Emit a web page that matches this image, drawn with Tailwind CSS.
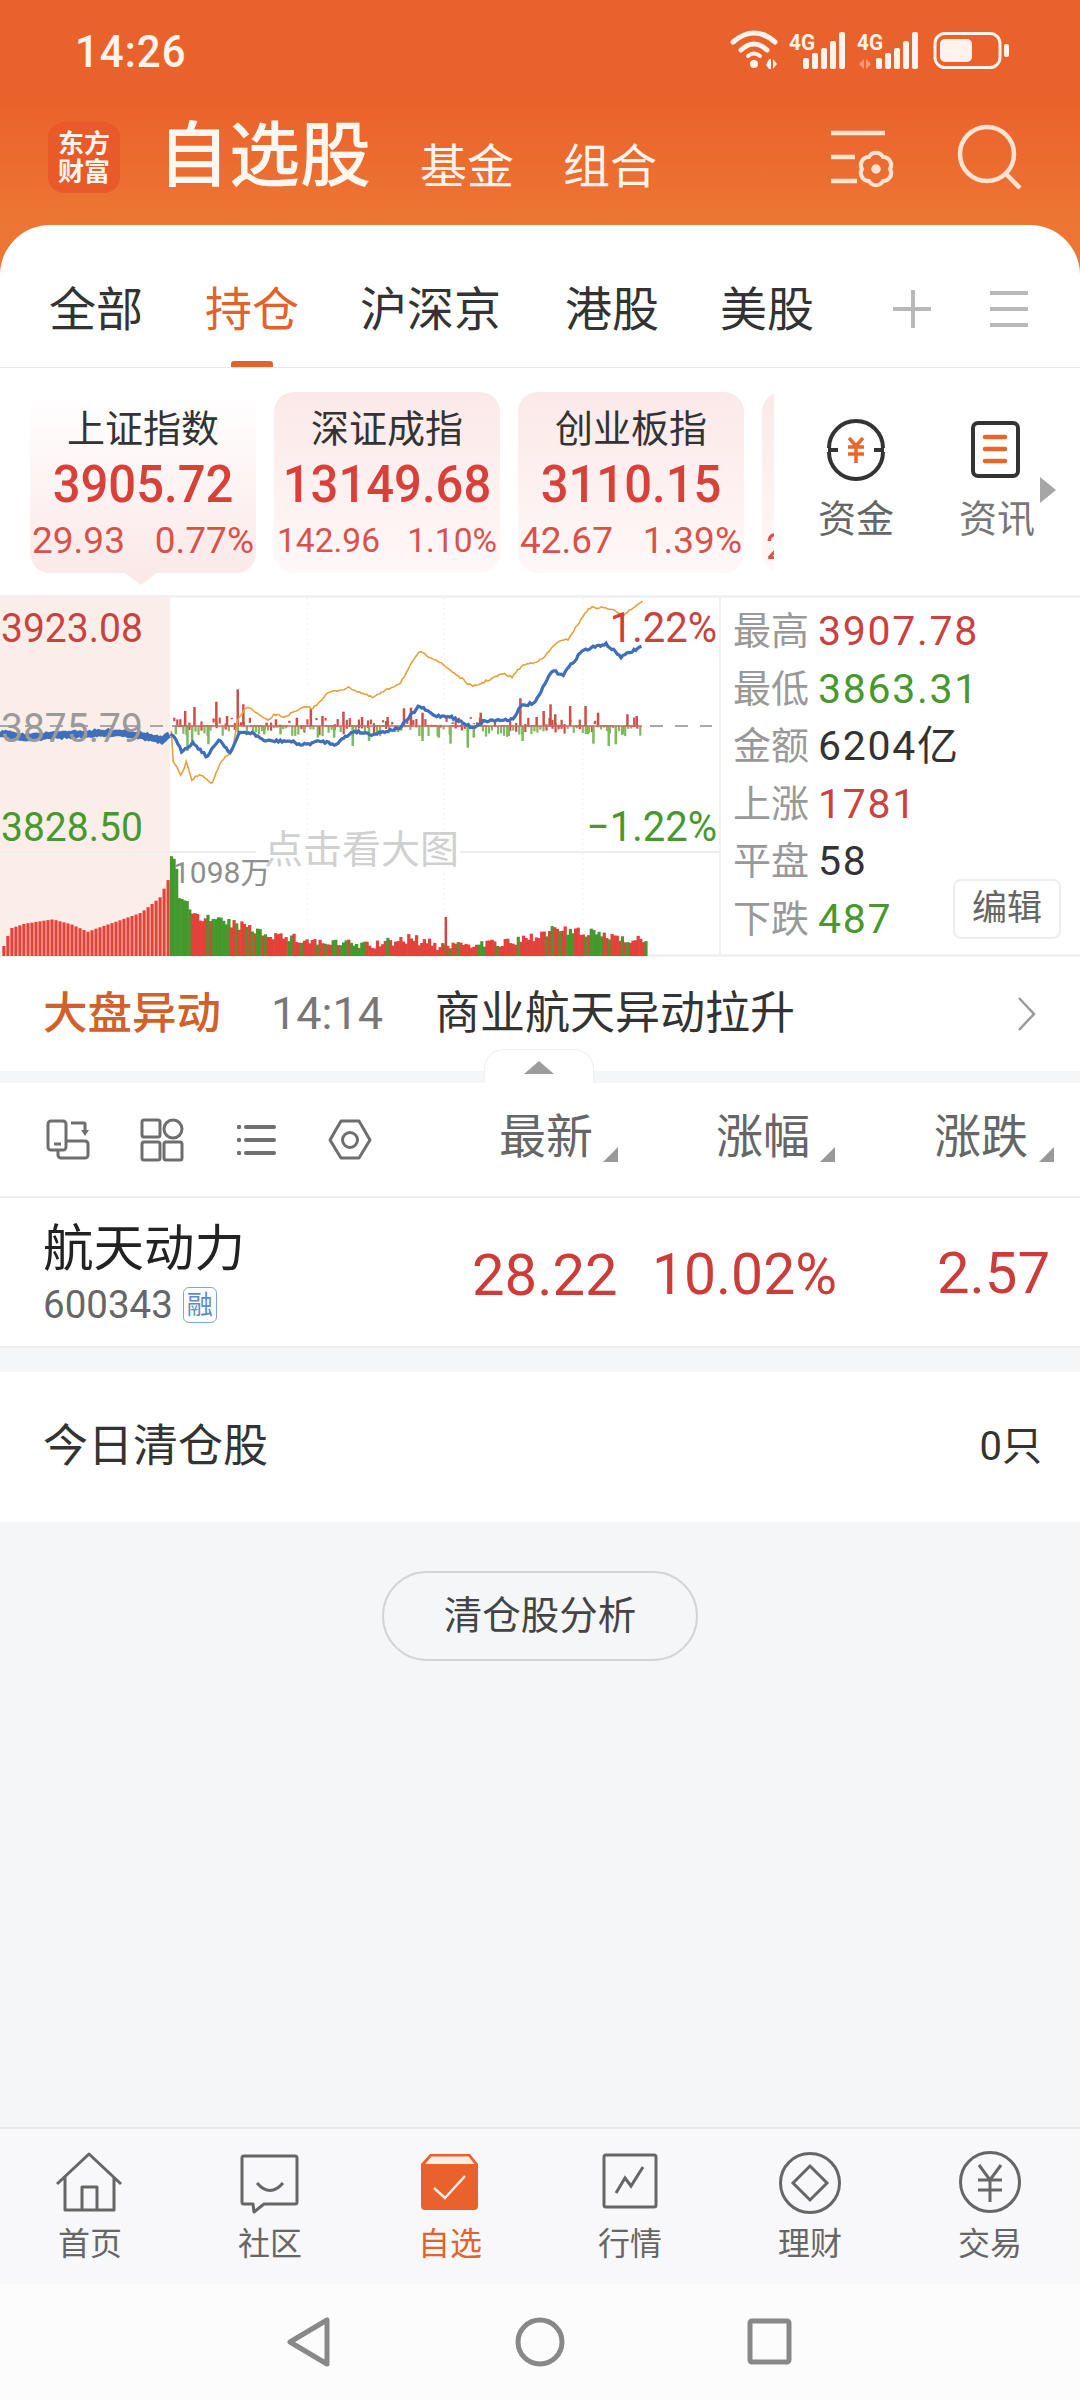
<!DOCTYPE html>
<html lang="zh-CN">
<head>
  <meta charset="UTF-8">
  <meta name="viewport" content="width=device-width, initial-scale=1.0">
  <title>自选股</title>
  <script src="https://cdn.jsdelivr.net/npm/@tailwindcss/browser@4"></script>
</head>
<body class="w-[1080px] h-[2400px] overflow-hidden bg-[#f5f6f8] text-[#333] font-['Roboto','Noto_Sans_CJK_SC',sans-serif]">

  <!-- 顶部橙色区 -->
  <div class="h-[275px] -mb-[50px] bg-[linear-gradient(180deg,#ea622b_0px,#ea622b_100px,#ed7634_225px)]">
    <div class="relative h-[104px]">
      <span class="absolute left-[75px] top-[28px] text-[42px] leading-[48px] font-medium tracking-[1px] scale-y-[1.07] text-[#fff3ec]">14:26</span>
      <svg class="absolute left-[720px] top-[25px]" width="300" height="50" viewBox="720 25 300 50" fill="#fff3ec">
        <path d="M733 42 Q754 24 775 42" fill="none" stroke="#fff3ec" stroke-width="5" stroke-linecap="round"/>
        <path d="M741 50 Q754 38 767 50" fill="none" stroke="#fff3ec" stroke-width="5" stroke-linecap="round"/>
        <path d="M748 56 Q754 51 760 56" fill="none" stroke="#fff3ec" stroke-width="4" stroke-linecap="round"/>
        <circle cx="754" cy="64" r="4"/>
        <path d="M769 59h2v10h-2l-3 -4zM773 59l4 5 -4 5z"/>
        <text x="789" y="50" font-size="22" font-weight="700" textLength="26" lengthAdjust="spacingAndGlyphs">4G</text>
        <rect x="803" y="58" width="6" height="11" rx="2"/><rect x="812" y="53" width="6" height="16" rx="2"/><rect x="821" y="48" width="6" height="21" rx="2"/><rect x="830" y="41" width="6" height="28" rx="2"/><rect x="839" y="32" width="6" height="37" rx="2"/>
        <text x="857" y="50" font-size="22" font-weight="700" textLength="26" lengthAdjust="spacingAndGlyphs">4G</text>
        <path d="M859 64l5 -5v10zM866 59l5 5 -5 5z" fill="#f39a78"/>
        <rect x="876" y="58" width="6" height="11" rx="2"/><rect x="885" y="53" width="6" height="16" rx="2"/><rect x="894" y="48" width="6" height="21" rx="2"/><rect x="903" y="41" width="6" height="28" rx="2"/><rect x="912" y="32" width="6" height="37" rx="2"/>
        <rect x="935" y="33.5" width="65" height="34" rx="10" fill="none" stroke="#fff3ec" stroke-width="3"/>
        <rect x="940" y="39" width="32" height="23" rx="5"/>
        <rect x="1004" y="44" width="5" height="13" rx="2"/>
      </svg>
    </div>
    <div class="relative flex items-end h-[90px] pl-[48px]">
      <div class="flex flex-col items-center justify-center w-[72px] h-[71px] mb-[1px] rounded-[16px] bg-[#e85a2a] text-[26px] leading-[28px] font-bold text-[#fff3ec]">
        <span>东方</span><span>财富</span>
      </div>
      <span class="ml-[38px] mb-[-7px] text-[71px] leading-[90px] font-medium text-[#fff6f0]">自选股</span>
      <span class="ml-[49px] mb-[-6px] text-[47px] leading-[66px] text-[#fff3ec]">基金</span>
      <span class="ml-[49px] mb-[-6px] text-[47px] leading-[66px] text-[#fff3ec]">组合</span>
      <svg class="absolute left-[825px] top-[18px]" width="210" height="80" viewBox="825 122 210 80" fill="none" stroke="#fde3d2" stroke-width="4.5">
        <path d="M831 133h54M831 157h24M831 181h26"/>
        <path d="M883 156.9A8 8 0 0 1 890 169A8 8 0 0 1 883 181.1A8 8 0 0 1 869 181.1A8 8 0 0 1 862 169A8 8 0 0 1 869 156.9A8 8 0 0 1 883 156.9z" stroke-width="4"/>
        <circle cx="876" cy="169" r="2.5" fill="#fde3d2"/>
        <circle cx="987" cy="154" r="27"/>
        <path d="M1006 174l14 14"/>
      </svg>
    </div>
  </div>

  <!-- 内容卡片 -->
  <div class="relative rounded-t-[50px] bg-white">
    <!-- 分组标签 -->
    <div class="relative flex items-center h-[143px] pl-[49px] pt-[28px] border-b border-[#e8e8e8] text-[47px] leading-[56px] text-[#333]">
      <span>全部</span>
      <span class="ml-[62px] text-[#e2622c]">持仓</span>
      <span class="ml-[61px]">沪深京</span>
      <span class="ml-[64px]">港股</span>
      <span class="ml-[61px]">美股</span>
      <svg class="absolute left-[890px] top-[63px]" width="140" height="44" viewBox="0 0 140 44" fill="none" stroke="#b8b8b8" stroke-width="4">
        <path d="M23 2v38M3 21h38M100 5h38M100 21h38M100 37h38"/>
      </svg>
      <span class="absolute left-[231px] bottom-0 w-[42px] h-[6px] rounded-t-[3px] bg-[#e2622c]"></span>
    </div>

    <!-- 指数 -->
    <div class="relative flex h-[230px] border-b-[3px] border-[#f1f1f1]">
      <div class="flex w-[774px] gap-[18px] pl-[30px] pt-[24px] overflow-hidden">
        <div class="relative shrink-0 flex flex-col items-center w-[226px] h-[181px] rounded-[20px] bg-linear-to-b from-white to-[#fbe9e8]">
          <span class="mt-[15px] text-[38px] leading-[44px]">上证指数</span>
          <span class="mt-[6px] text-[49px] leading-[56px] font-medium scale-y-[1.06] text-[#d8403a]">3905.72</span>
          <div class="mt-[8px] flex justify-between w-[222px] text-[37px] leading-[40px] text-[#d8524c]"><span>29.93</span><span>0.77%</span></div>
        </div>
        <div class="shrink-0 flex flex-col items-center w-[226px] h-[181px] rounded-[20px] bg-linear-to-b from-[#fbe9e8] to-[#fff8f8]">
          <span class="mt-[15px] text-[38px] leading-[44px]">深证成指</span>
          <span class="mt-[6px] text-[49px] leading-[56px] font-medium scale-y-[1.06] text-[#d8403a]">13149.68</span>
          <div class="mt-[8px] flex justify-between w-[220px] text-[33.5px] leading-[40px] text-[#d8524c]"><span>142.96</span><span>1.10%</span></div>
        </div>
        <div class="shrink-0 flex flex-col items-center w-[226px] h-[181px] rounded-[20px] bg-linear-to-b from-[#fbe9e8] to-[#fff8f8]">
          <span class="mt-[15px] text-[38px] leading-[44px]">创业板指</span>
          <span class="mt-[6px] text-[49px] leading-[56px] font-medium scale-y-[1.06] text-[#d8403a]">3110.15</span>
          <div class="mt-[8px] flex justify-between w-[222px] text-[37px] leading-[40px] text-[#d8524c]"><span>42.67</span><span>1.39%</span></div>
        </div>
        <div class="shrink-0 flex flex-col w-[226px] h-[181px] pl-[4px] pt-[135px] rounded-[20px] bg-linear-to-b from-[#fbe9e8] to-[#fff8f8] text-[37px] leading-[40px] text-[#d8524c]">2</div>
      </div>
      <span class="absolute left-[125px] top-[205px] w-0 h-0 border-x-[16px] border-x-transparent border-t-[12px] border-t-[#fbe9e8]"></span>
      <!-- 资金 资讯 -->
      <div class="relative flex-1">
        <svg class="absolute left-[50px] top-[50px]" width="64" height="64" viewBox="0 0 64 64" fill="none">
          <path d="M5 30A27 27 0 0 1 59 30M59 34A27 27 0 0 1 5 34" stroke="#333" stroke-width="4"/>
          <path d="M4 32h10M50 32h10" stroke="#333" stroke-width="4"/>
          <path d="M25 20l7 8 7 -8M24 29h16M24 36h16M32 28v17" stroke="#e5672e" stroke-width="3.5"/>
        </svg>
        <span class="absolute left-[44px] top-[128px] text-[38px] leading-[46px] text-[#666]">资金</span>
        <svg class="absolute left-[196px] top-[52px]" width="52" height="60" viewBox="0 0 52 60" fill="none">
          <rect x="3" y="3" width="45" height="53" rx="5" stroke="#333" stroke-width="4"/>
          <path d="M15 17h20M15 29h20M15 41h20" stroke="#e5672e" stroke-width="4.5" stroke-linecap="round"/>
        </svg>
        <span class="absolute left-[185px] top-[128px] text-[38px] leading-[46px] text-[#777]">资讯</span>
        <span class="absolute left-[266px] top-[109px] w-0 h-0 border-y-[13px] border-y-transparent border-l-[16px] border-l-[#a6a6a6]"></span>
      </div>
    </div>

    <!-- 走势图和统计 -->
    <div class="flex h-[359px] border-b-[3px] border-[#f1f1f1]">
      <div class="relative w-[721px] h-[356px] border-r-2 border-[#f1f1f1]">
        <svg id="chart" class="absolute left-0 top-0" width="720" height="358" viewBox="0 597 720 358"></svg>
        <span class="absolute left-[1px] top-[7px] text-[39px] leading-[46px] scale-y-[1.05] text-[#c9423f]">3923.08</span>
        <span class="absolute right-[2px] top-[7px] text-[40px] leading-[46px] scale-y-[1.05] text-[#c9423f]">1.22%</span>
        <span class="absolute left-[1px] top-[107px] text-[39px] leading-[46px] scale-y-[1.05] text-[#9a9a9a]">3875.79</span>
        <span class="absolute left-[1px] top-[206px] text-[39px] leading-[46px] scale-y-[1.05] text-[#46982f]">3828.50</span>
        <span class="absolute right-[2px] top-[206px] text-[40px] leading-[46px] scale-y-[1.05] text-[#46982f]">−1.22%</span>
        <span class="absolute left-[264px] top-[229px] text-[39px] leading-[46px] text-[#d0d0d0]">点击看大图</span>
        <span class="absolute left-[173px] top-[257px] text-[30px] leading-[36px] text-[#8e8e8e]">1098万</span>
      </div>
      <div class="relative flex-1 pt-[5px] pl-[12px] text-[38px] leading-[57.5px] text-[#999]">
        <div class="flex"><span class="w-[85px]">最高</span><span class="text-[41px] tracking-[1.7px] text-[#c9423f]">3907.78</span></div>
        <div class="flex"><span class="w-[85px]">最低</span><span class="text-[41px] tracking-[1.7px] text-[#46982f]">3863.31</span></div>
        <div class="flex"><span class="w-[85px]">金额</span><span class="text-[41px] tracking-[1.7px] text-[#333]">6204亿</span></div>
        <div class="flex"><span class="w-[85px]">上涨</span><span class="text-[41px] tracking-[1.7px] text-[#c9423f]">1781</span></div>
        <div class="flex"><span class="w-[85px]">平盘</span><span class="text-[41px] tracking-[1.7px] text-[#333]">58</span></div>
        <div class="flex"><span class="w-[85px]">下跌</span><span class="text-[41px] tracking-[1.7px] text-[#46982f]">487</span></div>
        <button class="absolute left-[232px] top-[281px] w-[108px] h-[60px] rounded-[8px] border-2 border-[#eeeeee] text-[35px] leading-[56px] text-[#666]">编辑</button>
      </div>
    </div>

    <!-- 大盘异动 -->
    <div class="relative flex items-center h-[114px] pl-[43px]">
      <span class="text-[44.5px] leading-[52px] font-medium text-[#d2602a]">大盘异动</span>
      <span class="ml-[50px] text-[45px] leading-[52px] text-[#777]">14:14</span>
      <span class="ml-[52px] text-[45px] leading-[52px] text-[#333]">商业航天异动拉升</span>
      <svg class="absolute left-[1016px] top-[39px]" width="22" height="36" viewBox="0 0 22 36" fill="none" stroke="#9a9a9a" stroke-width="2.5"><path d="M3 2l15 16 -15 16"/></svg>
    </div>

    <!-- 折叠条 -->
    <div class="relative h-[12px] bg-[#f5f6f8]">
      <div class="absolute left-[484px] -top-[22px] flex justify-center w-[110px] h-[34px] pt-[11px] rounded-t-[20px] border-x border-t border-[#f0f0f0] bg-white">
        <span class="w-0 h-0 border-x-[15px] border-x-transparent border-b-[13px] border-b-[#9c9c9c]"></span>
      </div>
    </div>

    <!-- 表头 -->
    <div class="relative flex items-center h-[115px] border-b-2 border-[#eeeeee] text-[47px] text-[#666]">
      <svg class="absolute left-[45px] top-[35px]" width="330" height="46" viewBox="0 0 330 46" fill="none" stroke="#6e6e6e" stroke-width="3">
        <rect x="3" y="3" width="18" height="29" rx="3"/>
        <path d="M9 26h7M13 32v5a3 3 0 0 0 3 3h24a3 3 0 0 0 3 -3v-11a3 3 0 0 0 -3 -3h-19M26 5h13a1 1 0 0 1 1 1v8"/>
        <path d="M36 12h8l-4 6z" fill="#6e6e6e" stroke="none"/>
        <rect x="97" y="2" width="18" height="17" rx="2"/><circle cx="128" cy="11" r="9"/><rect x="97" y="24" width="18" height="18" rx="2"/><rect x="119" y="24" width="18" height="18" rx="2"/>
        <path d="M201 9h28M201 22h28M201 35h28" stroke-width="4" stroke-linecap="round"/>
        <circle cx="194" cy="9" r="2.2" fill="#6e6e6e" stroke="none"/><circle cx="194" cy="22" r="2.2" fill="#6e6e6e" stroke="none"/><circle cx="194" cy="35" r="2.2" fill="#6e6e6e" stroke="none"/>
        <path d="M296 3h18l11 19 -11 18h-18l-11 -18z" stroke-linejoin="round"/><circle cx="305" cy="22" r="7.5"/>
      </svg>
      <span class="absolute left-[499px] top-[26px] leading-[56px]">最新</span>
      <span class="absolute left-[603px] top-[64px] w-0 h-0 border-b-[15px] border-b-[#999] border-l-[15px] border-l-transparent"></span>
      <span class="absolute left-[716px] top-[26px] leading-[56px]">涨幅</span>
      <span class="absolute left-[820px] top-[64px] w-0 h-0 border-b-[15px] border-b-[#999] border-l-[15px] border-l-transparent"></span>
      <span class="absolute left-[934px] top-[26px] leading-[56px]">涨跌</span>
      <span class="absolute left-[1039px] top-[64px] w-0 h-0 border-b-[15px] border-b-[#999] border-l-[15px] border-l-transparent"></span>
    </div>

    <!-- 持仓股 -->
    <div class="relative flex flex-col h-[150px] pl-[43px] pt-[21px] border-b-2 border-[#eeeeee]">
      <span class="text-[50.5px] leading-[60px] text-[#222]">航天动力</span>
      <div class="flex items-center mt-[4px]">
        <span class="text-[38.5px] leading-[44px] text-[#666]">600343</span>
        <span class="ml-[10px] flex items-center justify-center w-[34px] h-[36px] rounded-[6px] border border-[#7ea6d8] text-[26px] leading-none text-[#5c8ccb]">融</span>
      </div>
      <span class="absolute left-[472px] top-[43px] text-[58px] leading-[68px] text-[#cc3c38]">28.22</span>
      <span class="absolute left-[652px] top-[43px] text-[57px] leading-[68px] text-[#cc3c38]">10.02%</span>
      <span class="absolute right-[30px] top-[41px] text-[58px] leading-[68px] text-[#cc3c38]">2.57</span>
    </div>
  </div>

  <!-- 今日清仓股 -->
  <div class="flex items-center justify-between h-[150px] mt-[24px] px-[43px] pr-[38px] bg-white text-[45px] leading-[52px] text-[#333]">
    <span>今日清仓股</span><span class="text-[40px]">0只</span>
  </div>
  <div class="flex justify-center pt-[49px] h-[605px]">
    <button class="w-[316px] h-[90px] rounded-full border-2 border-[#d4d4d4] text-[38.5px] text-[#444]">清仓股分析</button>
  </div>

  <!-- 底部导航 -->
  <div class="grid grid-cols-6 h-[157px] px-0 border-t-2 border-[#e8e8e8] bg-[#f8f8fa] text-[32px] leading-[38px] text-[#666]">
    <div class="flex flex-col items-center pt-[21px]">
      <svg width="70" height="64" viewBox="0 0 70 64" fill="none" stroke="#666" stroke-width="3"><path d="M2 34L34 4l32 30M10 27v33h49V27M27 60V37h15v23" stroke-linejoin="round"/></svg>
      <span class="mt-[11px]">首页</span>
    </div>
    <div class="flex flex-col items-center pt-[21px]">
      <svg width="70" height="64" viewBox="0 0 70 64" fill="none" stroke="#666" stroke-width="3"><path d="M9 6h51a2 2 0 0 1 2 2v44a2 2 0 0 1 -2 2H29l-10 8 -1 -8H9a2 2 0 0 1 -2 -2V8a2 2 0 0 1 2 -2z" stroke-linejoin="round"/><path d="M22 33q13 15 26 0"/></svg>
      <span class="mt-[11px]">社区</span>
    </div>
    <div class="flex flex-col items-center pt-[21px] text-[#e2622c]">
      <svg width="70" height="64" viewBox="0 0 70 64"><path d="M15 4h40l8 10v42a4 4 0 0 1 -4 4H10a4 4 0 0 1 -4 -4V14z" fill="#ea622b"/><path d="M16.5 6.5h37l6 7.5H10z" fill="#fdeee3"/><path d="M19 38l11 10 20 -22" fill="none" stroke="#fdeee3" stroke-width="2.5"/></svg>
      <span class="mt-[11px]">自选</span>
    </div>
    <div class="flex flex-col items-center pt-[21px]">
      <svg width="70" height="64" viewBox="0 0 70 64" fill="none" stroke="#666" stroke-width="3"><rect x="9" y="5" width="52" height="52" rx="2"/><path d="M21 43l9 -15 6 8 12 -19"/></svg>
      <span class="mt-[11px]">行情</span>
    </div>
    <div class="flex flex-col items-center pt-[21px]">
      <svg width="70" height="64" viewBox="0 0 70 64" fill="none" stroke="#666" stroke-width="3"><circle cx="35" cy="33" r="29.5"/><path d="M35 16l17 17 -17 17 -17 -17z"/></svg>
      <span class="mt-[11px]">理财</span>
    </div>
    <div class="flex flex-col items-center pt-[21px]">
      <svg width="70" height="64" viewBox="0 0 70 64" fill="none" stroke="#666" stroke-width="3"><circle cx="35" cy="32" r="29.5"/><path d="M24 15l11 15 11 -15M23 30h24M23 40h24M35 30v22"/></svg>
      <span class="mt-[11px]">交易</span>
    </div>
  </div>

  <!-- 系统导航条 -->
  <div class="flex items-start justify-center h-[116px] pt-[32px] bg-[#fcfcfc]">
    <svg width="520" height="56" viewBox="280 2316 520 56" fill="none" stroke="#888" stroke-width="5" stroke-linejoin="round">
      <path d="M327 2320v44l-37 -22z"/>
      <circle cx="540" cy="2342" r="22"/>
      <rect x="750" y="2321" width="39" height="41" rx="2"/>
    </svg>
  </div>

  <script>
    // 分时图数据按截图取点，中间补小幅抖动
    var blue = [[0,425],[50,440],[100,435],[150,430],[200,428],[260,425],[310,435],[350,450],[368,425],[390,480],[415,455],[445,498],[470,445],[495,485],[515,425],[540,425],[570,450],[620,450],[650,462],[690,450],[720,460],[760,420],[800,430],[860,410],[900,345],[935,375],[965,375],[1015,410],[1040,390],[1100,385],[1120,345],[1150,335],[1185,240],[1210,250],[1250,180],[1300,158],[1335,198],[1380,165]];
    var orange = [[368,420],[372,510],[390,555],[400,510],[412,565],[430,550],[455,580],[475,510],[500,480],[510,390],[530,345],[575,390],[590,370],[610,378],[660,345],[670,355],[705,305],[750,290],[800,320],[860,275],[900,182],[935,205],[965,235],[1015,288],[1080,248],[1100,258],[1120,225],[1165,205],[1195,155],[1220,145],[1265,50],[1300,50],[1340,70],[1380,30]];
    var redBars = [[395,360],[415,348],[462,332],[485,375],[508,295],[520,340],[570,395],[590,385],[635,380],[665,352],[690,375],[735,362],[775,378],[830,378],[865,352],[880,350],[905,365],[1030,365],[1115,322],[1150,378],[1165,360],[1180,340],[1190,370],[1222,345],[1255,345],[1282,365],[1345,370],[1365,375]];
    var greenBars = [[375,430],[400,480],[410,450],[445,460],[480,410],[565,430],[600,430],[650,420],[680,440],[715,440],[755,465],[790,450],[905,450],[940,440],[965,458],[1002,470],[1015,440],[1090,435],[1120,450],[1260,430],[1272,458],[1305,465],[1320,460],[1335,430]];
    var volTop = [[365,785],[375,835],[382,925],[420,975],[470,995],[520,1010],[600,1040],[700,1060],[800,1065],[880,1045],[940,1068],[1000,1060],[1100,1060],[1180,1020],[1260,1030],[1385,1050]];
    var preTop = [[5,1065],[20,1012],[50,998],[110,985],[150,1000],[185,1022],[250,990],[300,965],[340,920],[360,860]];

    var seed = 7;
    function rnd() { seed = (seed * 16807) % 2147483647; return seed / 2147483647; }
    function fx(x) { return x / 2.148; }
    function fy(y) { return 590 + y / 3; }
    function at(pts, x) {
      for (var i = 1; i < pts.length; i++) {
        if (x <= pts[i][0]) {
          var t = (x - pts[i-1][0]) / (pts[i][0] - pts[i-1][0]);
          return pts[i-1][1] + (pts[i][1] - pts[i-1][1]) * t;
        }
      }
      return pts[pts.length-1][1];
    }
    function line(pts, jitter, from, to) {
      var out = [];
      for (var x = from; x <= to; x += 4) out.push(fx(x).toFixed(1) + ',' + fy(at(pts, x) + (rnd() - 0.5) * jitter).toFixed(1));
      return out.join(' ');
    }
    function rect(x, y, w, h, c) { return '<rect x="' + x.toFixed(1) + '" y="' + y.toFixed(1) + '" width="' + w + '" height="' + h.toFixed(1) + '" fill="' + c + '"/>'; }

    var s = '';
    s += rect(0, 597, 170, 358, '#fbeee8');
    [307, 444, 583].forEach(function (x) {
      s += '<line x1="' + x + '" y1="597" x2="' + x + '" y2="955" stroke="#f0f0f0" stroke-width="1" stroke-dasharray="2 3"/>';
    });
    s += '<path d="M0 851H256M460 851H720" stroke="#eeeeee" stroke-width="2"/>';
    s += '<line x1="0" y1="725" x2="712" y2="725" stroke="#a8a8a8" stroke-width="2" stroke-dasharray="13 12"/>';

    // 资金柱
    for (var x = 372; x < 1375; x += 6.5) {
      if (rnd() < 0.5) s += rect(fx(x), fy(405) - rnd() * 9, 2.2, rnd() * 9 + 1, '#cc4f4a');
      else s += rect(fx(x), fy(405), 2.2, rnd() * 10 + 1, '#7db95e');
    }
    redBars.forEach(function (b) { var y = fy(b[1]); s += rect(fx(b[0]), y, 2.5, fy(405) - y, '#cc4f4a'); });
    greenBars.forEach(function (b) { var y = fy(b[1]); s += rect(fx(b[0]), fy(405), 2.5, y - fy(405), '#7db95e'); });
    s += '<line x1="172" y1="725" x2="642" y2="725" stroke="#cc6a60" stroke-width="1.5"/>';

    // 成交量
    for (var p = 5; p < 362; p += 8.6) {
      var t1 = fy(at(preTop, p));
      s += rect(fx(p), t1, 3.2, 955 - t1, '#e5423a');
    }
    for (var q = 365; q < 1385; q += 5.6) {
      var t2 = fy(at(volTop, q)) + rnd() * 10 - 6;
      var green = (q > 365 && q < 640 && rnd() < 0.55) || (q >= 640 && q < 800 && rnd() < 0.45) || (q >= 1160 && rnd() < 0.45) || (q >= 800 && q < 1160 && rnd() < 0.15);
      if (q === 365) green = true;
      s += rect(fx(q), t2, 3.2, 955 - t2, green ? '#45982b' : '#e2423a');
    }
    var spike = fy(978);
    s += rect(fx(955), spike, 2.5, 955 - spike, '#d8433b');

    s += '<polyline points="' + line(orange, 6, 368, 1380) + '" fill="none" stroke="#e4a23f" stroke-width="1.6"/>';
    s += '<polyline points="' + line(blue, 7, 0, 366) + '" fill="none" stroke="#3f6fb8" stroke-width="6.5"/>';
    s += '<polyline points="' + line(blue, 8, 366, 1380) + '" fill="none" stroke="#3f6fb8" stroke-width="3.2"/>';
    document.getElementById('chart').innerHTML = s;
  </script>
</body>
</html>
